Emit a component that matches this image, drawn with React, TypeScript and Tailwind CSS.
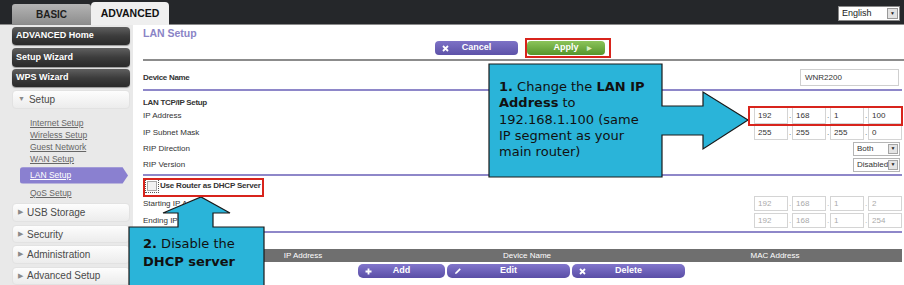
import React from "react";

const subLinks = ["Internet Setup", "Wireless Setup", "Guest Network", "WAN Setup"];

function DarkItem({ label, mt }: { label: string; mt: string }) {
  return (
    <div
      className={`${mt} h-[19px] rounded-[4px] bg-linear-to-b from-[#606060] via-[#3c3c3c] to-[#2a2a2a] pl-[4px] flex items-center text-[9px] font-bold text-white shadow-[0_1px_1px_rgba(0,0,0,0.35)]`}
    >
      {label}
    </div>
  );
}

function LightItem({ label, open, mt, h }: { label: string; open?: boolean; mt: string; h: string }) {
  return (
    <div
      className={`${mt} ${h} rounded-[4px] bg-linear-to-b from-[#fdfdfd] to-[#ececec] border border-[#e2e2e2] pl-[5px] flex items-center gap-[4px] text-[10px] text-[#4a4a4a]`}
    >
      <span className="text-[7px] text-[#8a8a8a]">{open ? "▼" : "▶"}</span>
      <span>{label}</span>
    </div>
  );
}

function Sidebar() {
  return (
    <div className="w-[133px] shrink-0 bg-[#e9e9e9] pl-[12px] pr-[3px] flex flex-col">
      <DarkItem label="ADVANCED Home" mt="mt-[2px]" />
      <DarkItem label="Setup Wizard" mt="mt-[3px]" />
      <DarkItem label="WPS Wizard" mt="mt-[2px]" />
      <LightItem label="Setup" open mt="mt-[3px]" h="h-[20px]" />
      <div className="mt-[8px] pl-[18px] flex flex-col text-[8.5px] leading-[12px] text-[#666] underline">
        {subLinks.map((l) => (
          <span key={l}>{l}</span>
        ))}
      </div>
      <div className="mt-[2px] ml-[8px] mr-[2px] h-[17px] rounded-l-[3px] bg-[#8a80d0] pl-[10px] flex items-center text-[8.5px] text-white underline [clip-path:polygon(0_0,95%_0,100%_50%,95%_100%,0_100%)]">
        LAN Setup
      </div>
      <div className="mt-[3px] pl-[18px] text-[8.5px] leading-[12px] text-[#666] underline">QoS Setup</div>
      <LightItem label="USB Storage" mt="mt-[4px]" h="h-[20px]" />
      <LightItem label="Security" mt="mt-[3px]" h="h-[19px]" />
      <LightItem label="Administration" mt="mt-[2px]" h="h-[19px]" />
      <LightItem label="Advanced Setup" mt="mt-[3px]" h="h-[19px]" />
    </div>
  );
}

function IpBoxes({ values, disabled, h }: { values: string[]; disabled?: boolean; h: string }) {
  return (
    <div className="flex items-center">
      {values.map((v, i) => (
        <div key={i} className="flex items-center">
          {i > 0 && <span className={`w-[4px] text-center ${disabled ? "text-[#aaa]" : "text-[#555]"}`}>.</span>}
          <div
            className={`w-[34px] ${h} border border-[#d4d4d4] bg-white pl-[3px] flex items-center ${
              disabled ? "text-[#aaa]" : "text-[#333]"
            }`}
          >
            {v}
          </div>
        </div>
      ))}
    </div>
  );
}

function Select({ value }: { value: string }) {
  return (
    <div className="w-[47px] h-[14px] border border-[#b5b5b5] bg-white flex items-center justify-between pl-[3px] pr-[1px] text-[8px] text-[#333]">
      <span>{value}</span>
      <span className="w-[10px] h-[10px] bg-[#e4e4e4] border border-[#a5a5a5] flex items-center justify-center text-[5px] text-[#222]">
        ▼
      </span>
    </div>
  );
}

function ActionBtn({ icon, label, w }: { icon: React.ReactNode; label: string; w: string }) {
  return (
    <div
      className={`${w} h-[14px] rounded-[5px] bg-linear-to-b from-[#8276cc] to-[#5a4ea6] grid grid-cols-[18px_1fr_18px] items-center text-white text-[9px] font-bold`}
    >
      <span className="pl-[7px] flex items-center">{icon}</span>
      <span className="text-center">{label}</span>
      <span />
    </div>
  );
}

const Cross = () => (
  <svg width="7" height="7" viewBox="0 0 7 7">
    <path d="M1 1L6 6M6 1L1 6" stroke="white" strokeWidth="1.8" />
  </svg>
);
const Plus = () => (
  <svg width="7" height="7" viewBox="0 0 7 7">
    <path d="M3.5 0.5V6.5M0.5 3.5H6.5" stroke="white" strokeWidth="1.8" />
  </svg>
);
const Pencil = () => (
  <svg width="8" height="8" viewBox="0 0 8 8">
    <path d="M1 7L1.6 5.2L5.6 1.2L6.8 2.4L2.8 6.4Z" fill="white" />
  </svg>
);

function Main() {
  return (
    <div className="flex-1 pl-[10px] pr-[2px] flex flex-col text-[8px] text-[#333]">
      <div className="h-[13px] flex items-end">
        <span className="text-[10.5px] font-bold text-[#8a84c6] leading-none">LAN Setup</span>
      </div>
      <div className="h-[20px] pl-[292px] flex items-center gap-[9px]">
        <div className="w-[83px] h-[14px] rounded-[4px] bg-linear-to-b from-[#7d72c6] to-[#5d52a8] grid grid-cols-[18px_1fr_18px] items-center text-white text-[9px] font-bold">
          <span className="pl-[7px] flex items-center">
            <Cross />
          </span>
          <span className="text-center">Cancel</span>
          <span />
        </div>
        <div className="w-[78px] h-[14px] rounded-[4px] bg-linear-to-b from-[#8cc45a] to-[#55952a] grid grid-cols-[18px_1fr_18px] items-center text-white text-[9px] font-bold">
          <span />
          <span className="text-center">Apply</span>
          <span className="text-[6px] text-[#d8f0c0]">▶</span>
        </div>
      </div>
      <div className="mt-[1px] h-[2px] bg-[#8c8c8c] -mr-[2px]" />
      <div className="mt-[8px] h-[17px] flex items-center justify-between">
        <span className="font-bold tracking-[-0.3px]">Device Name</span>
        <div className="w-[99px] h-[17px] mr-[3px] border border-[#cfcfcf] pl-[4px] flex items-center">WNR2200</div>
      </div>
      <div className="mt-[3px] h-[2px] bg-[#8e87c9]" />
      <div className="h-[16px] flex items-end">
        <span className="font-bold tracking-[-0.3px] leading-none">LAN TCP/IP Setup</span>
      </div>
      <div className="h-[17px] flex items-center justify-between">
        <span>IP Address</span>
        <IpBoxes values={["192", "168", "1", "100"]} h="h-[17px]" />
      </div>
      <div className="h-[17px] flex items-center justify-between">
        <span>IP Subnet Mask</span>
        <IpBoxes values={["255", "255", "255", "0"]} h="h-[15px]" />
      </div>
      <div className="h-[16px] flex items-center justify-between pr-[2px]">
        <span>RIP Direction</span>
        <Select value="Both" />
      </div>
      <div className="h-[16px] flex items-center justify-between pr-[2px]">
        <span>RIP Version</span>
        <Select value="Disabled" />
      </div>
      <div className="mt-[1px] h-[2px] bg-[#8e87c9]" />
      <div className="mt-[1px] h-[18px] flex items-center gap-[3px] pl-[4px]">
        <span className="w-[10px] h-[10px] border border-[#a8a8a8] bg-[#f2f2f2] outline-1 outline-dotted outline-[#555] outline-offset-1" />
        <span className="font-bold tracking-[-0.2px]">Use Router as DHCP Server</span>
      </div>
      <div className="h-[17px] flex items-center justify-between">
        <span>Starting IP Address</span>
        <IpBoxes values={["192", "168", "1", "2"]} disabled h="h-[15px]" />
      </div>
      <div className="h-[17px] flex items-center justify-between">
        <span>Ending IP Address</span>
        <IpBoxes values={["192", "168", "1", "254"]} disabled h="h-[15px]" />
      </div>
      <div className="mt-[2px] h-[2px] bg-[#8e87c9]" />
      <div className="mt-[16px] h-[13px] bg-[#6f6f6f] flex items-center text-white text-[8px]">
        <span className="w-[120px]" />
        <span className="w-[80px] text-center">IP Address</span>
        <span className="w-[368px] text-center">Device Name</span>
        <span className="w-[128px] text-center">MAC Address</span>
      </div>
      <div className="mt-[2px] h-[14px] pl-[215px] flex items-center gap-[2px]">
        <ActionBtn icon={<Plus />} label="Add" w="w-[87px]" />
        <ActionBtn icon={<Pencil />} label="Edit" w="w-[123px]" />
        <ActionBtn icon={<Cross />} label="Delete" w="w-[113px]" />
      </div>
    </div>
  );
}

function Header() {
  return (
    <div className="h-[25px] bg-[#25272a] border-b border-[#8a8a8a] flex items-end pl-[12px]">
      <div className="w-[79px] h-[20px] rounded-t-[3px] bg-linear-to-b from-[#b4b4b4] to-[#8e8e8e] flex items-center justify-center text-[10px] font-bold text-[#1e1e1e]">
        BASIC
      </div>
      <div className="w-[78px] h-[23px] -mb-[1px] rounded-t-[4px] bg-[#efefef] flex items-center justify-center text-[10.5px] font-bold text-[#111]">
        ADVANCED
      </div>
      <div className="ml-auto mr-[4px] mb-[3px] w-[62px] h-[15px] bg-white border border-[#888] flex items-center justify-between pl-[3px] pr-[1px] text-[9px] text-[#222]">
        <span>English</span>
        <span className="w-[11px] h-[11px] bg-[#e2e2e2] border border-[#999] flex items-center justify-center text-[5px]">▼</span>
      </div>
    </div>
  );
}

function Callouts() {
  return (
    <>
      {/* callout 1: LAN IP */}
      <svg className="absolute left-[488px] top-[63px]" width="264" height="116" viewBox="0 0 264 116">
        <polygon
          points="1,1 174,1 174,43 215,43 215,29 260,57 215,86 215,72 174,72 174,114 1,114"
          fill="#2ab4d9"
          stroke="#1a1a1a"
          strokeWidth="1.2"
        />
      </svg>
      <div className="absolute left-[499px] top-[79px] font-['DejaVu_Sans',Verdana,sans-serif] text-[13px] leading-[16.3px] text-[#111]">
        <b>1.</b> Change the <b>LAN IP</b>
        <br />
        <b>Address</b> to
        <br />
        192.168.1.100 (same
        <br />
        IP segment as your
        <br />
        main router)
      </div>

      {/* callout 2: DHCP */}
      <svg className="absolute left-[128px] top-[196px]" width="140" height="92" viewBox="0 0 140 92">
        <polygon
          points="1,31 50,31 50,17 35,17 73,1 102,17 85,17 85,31 136,31 136,91 1,91"
          fill="#2ab4d9"
          stroke="#1a1a1a"
          strokeWidth="1.2"
        />
      </svg>
      <div className="absolute left-[143px] top-[235px] font-['DejaVu_Sans',Verdana,sans-serif] text-[13px] leading-[18px] text-[#111]">
        <b>2.</b> Disable the
        <br />
        <b>DHCP server</b>
      </div>

      {/* red highlight boxes */}
      <div className="absolute left-[525px] top-[38px] w-[86px] h-[20px] border-2 border-[#d8241c]" />
      <div className="absolute left-[748px] top-[106px] w-[155px] h-[20px] border-2 border-[#d8241c]" />
      <div className="absolute left-[143px] top-[178px] w-[121px] h-[19px] border-2 border-[#d8241c]" />
    </>
  );
}

export default function App() {
  return (
    <div className="relative w-[904px] h-[285px] overflow-hidden bg-white font-['Liberation_Sans',Arial,sans-serif]">
      <Header />
      <div className="flex h-[260px]">
        <Sidebar />
        <Main />
      </div>
      <Callouts />
    </div>
  );
}
